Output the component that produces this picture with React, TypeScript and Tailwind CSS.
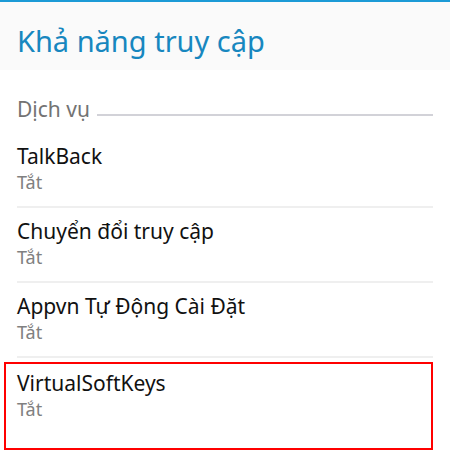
const items = ["TalkBack", "Chuyển đổi truy cập", "Appvn Tự Động Cài Đặt"];

export default function App() {
  return (
    <div className="w-[450px] h-[455px] overflow-hidden bg-white font-['Noto_Sans',sans-serif]">
      <div className="h-[2px] bg-[#1c9ad6]" />
      <div className="h-[68px] bg-[#fafafa] px-[17px] pt-[24px]">
        <h1 className="text-[29px] leading-[29px] text-[#1787bf]">Khả năng truy cập</h1>
      </div>

      <div className="px-[17px]">
        <div className="flex items-end gap-[7px] pt-[26px] mb-[10px]">
          <span className="text-[21px] leading-[27px] text-[#737373]">Dịch vụ</span>
          <div className="flex-1 h-[2px] bg-[#d2d2d8] mb-[7px]" />
        </div>

        {items.map((name) => (
          <div key={name} className="h-[75px] border-b-2 border-[#efefef] pt-[9px]">
            <div className="text-[21px] leading-[28px] text-[#111]">{name}</div>
            <div className="text-[18px] leading-[25px] text-[#808080]">Tắt</div>
          </div>
        ))}

        <div className="-ml-[13px] mt-[4px] h-[88px] border-2 border-[#ff0000] pl-[11px] pt-[5px]">
          <div className="text-[21px] leading-[28px] text-[#111]">VirtualSoftKeys</div>
          <div className="text-[18px] leading-[25px] text-[#808080]">Tắt</div>
        </div>
      </div>
    </div>
  );
}
